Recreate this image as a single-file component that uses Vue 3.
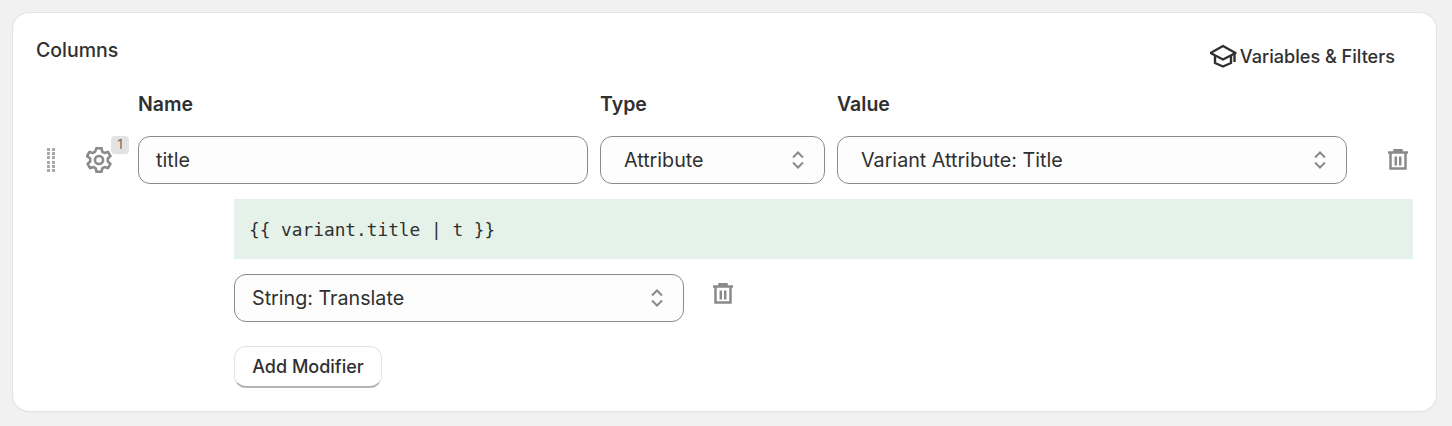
<script setup>
const chevron = 'M4 7.500 9 2.500 14 7.500M4 12.500 9 17.500 14 12.500'
const trash = 'M1 4.500h20M7.500 4V2.200h7V4M3.500 5v15.500h15V5M8.800 8.500v9M13.200 8.500v9'
</script>

<template>
  <div class="page">
    <section class="card">
      <header class="head">
        <h2 class="title">Columns</h2>
        <div class="link">
          <svg class="cap" width="28" height="24" viewBox="1 0 28 24" fill="none" stroke="#303030" stroke-width="2.400" stroke-linejoin="round">
            <path d="M1.500 9 14 2l12.500 7L14 15.500z" />
            <path d="M6 12v7l8 3.500 8-3.500v-7" />
            <path d="M25.500 9v9" />
          </svg>
          <span>Variables &amp; Filters</span>
        </div>
      </header>

      <div class="labels">
        <span class="name-col">Name</span>
        <span class="type-col">Type</span>
        <span>Value</span>
      </div>

      <div class="row">
        <div class="handle">
          <i v-for="n in 12" :key="n"></i>
        </div>
        <div class="gear">
          <svg width="26" height="26" viewBox="1.500 1.500 23 23" fill="none" stroke="#8a8a8a" stroke-width="2.300" stroke-linejoin="round">
            <path d="M10.800 2.500h4.400l.7 3.100 2 1.200 3-1 2.200 3.800-2.300 2.100v2.600l2.300 2.100-2.200 3.800-3-1-2 1.200-.7 3.100h-4.400l-.7-3.100-2-1.200-3 1-2.200-3.800 2.300-2.100v-2.600L2.400 9.600l2.200-3.800 3 1 2-1.200z" />
            <circle cx="13" cy="13" r="3.600" />
          </svg>
          <span class="badge">1</span>
        </div>
        <div class="field name-col">title</div>
        <div class="field select type-col">
          <span>Attribute</span>
          <svg width="18" height="20" viewBox="0 0 18 20" fill="none" stroke="#8a8a8a" stroke-width="2"><path :d="chevron" /></svg>
        </div>
        <div class="field select value-col">
          <span>Variant Attribute: Title</span>
          <svg width="18" height="20" viewBox="0 0 18 20" fill="none" stroke="#8a8a8a" stroke-width="2"><path :d="chevron" /></svg>
        </div>
        <svg class="trash" width="22" height="24" viewBox="0 0 22 24" fill="none" stroke="#8a8a8a" stroke-width="2.500"><path :d="trash" /></svg>
      </div>

      <div class="modifiers">
        <div class="code">{{ '\{\{ variant.title | t \}\}' }}</div>
        <div class="mod-row">
          <div class="field select mod-select">
            <span>String: Translate</span>
            <svg width="18" height="20" viewBox="0 0 18 20" fill="none" stroke="#8a8a8a" stroke-width="2"><path :d="chevron" /></svg>
          </div>
          <svg class="trash-small" width="22" height="24" viewBox="0 0 22 24" fill="none" stroke="#8a8a8a" stroke-width="2.500"><path :d="trash" /></svg>
        </div>
        <button class="add" type="button">Add Modifier</button>
      </div>
    </section>
  </div>
</template>

<style>
html, body { margin: 0; background: #f1f1f1; }
</style>

<style scoped>
.page {
  padding: 13px 16px 15px 13px;
  font-family: Inter, "Liberation Sans", sans-serif;
  color: #303030;
}
.card {
  box-sizing: border-box;
  height: 398px;
  background: #fff;
  border-radius: 16px;
  box-shadow: 0 0 0 1px #e3e3e3, 0 1px 1px #d0d0d0;
  padding: 26px 23px 0;
}
.head {
  display: flex;
  justify-content: space-between;
  height: 53px;
}
.title {
  margin: 0;
  font-size: 19.500px;
  line-height: 22px;
  font-weight: 500;
}
.link {
  display: flex;
  align-items: center;
  gap: 2px;
  height: 24px;
  margin: 5px 18px 0 0;
  font-size: 18.100px;
  font-weight: 500;
}
.labels {
  display: flex;
  padding-left: 102px;
  gap: 12px;
  font-size: 19.500px;
  font-weight: 600;
  line-height: 24px;
}
.labels .name-col { width: 450px; }
.labels .type-col { width: 225px; }
.row {
  display: flex;
  align-items: center;
  gap: 12px;
  margin-top: 20px;
}
.handle {
  display: grid;
  grid-template-columns: repeat(2, 3px);
  gap: 1.400px 2px;
  width: 8px;
  margin-left: 11px;
  flex-shrink: 0;
}
.handle i {
  width: 3px;
  height: 3px;
  background: #aaaaaa;
}
.gear {
  position: relative;
  display: flex;
  flex-shrink: 0;
  width: 26px;
  margin-left: 19px;
}
.badge {
  position: absolute;
  top: -11px;
  left: 25px;
  width: 18px;
  height: 18px;
  border-radius: 4px;
  background: #e3e3e3;
  font-size: 12.500px;
  line-height: 18px;
  text-align: center;
  color: #616161;
}
.field {
  box-sizing: border-box;
  flex-shrink: 0;
  height: 48px;
  display: flex;
  align-items: center;
  background: #fdfdfd;
  border: 1px solid #8a8a8a;
  border-radius: 12px;
  font-size: 19.700px;
  padding: 0 17px;
}
.row > .name-col { width: 450px; margin-left: 14px; }
.row > .type-col { width: 225px; }
.value-col { width: 510px; }
.select {
  justify-content: space-between;
  padding: 0 17px 0 23px;
}
.trash { flex-shrink: 0; margin-left: 28px; }
.modifiers {
  margin: 15px 0 0 198px;
}
.code {
  height: 60px;
  width: 1179px;
  box-sizing: border-box;
  padding-left: 15px;
  display: flex;
  align-items: center;
  background: #e5f2e9;
  font-family: "DejaVu Sans Mono", monospace;
  font-size: 17.800px;
}
.mod-row {
  display: flex;
  align-items: flex-start;
  gap: 28px;
  margin-top: 15px;
}
.mod-select {
  width: 450px;
  padding-left: 17px;
}
.trash-small { margin-top: 8px; }
.add {
  display: block;
  box-sizing: border-box;
  width: 148px;
  height: 42px;
  margin-top: 24px;
  padding: 0;
  background: #fff;
  border: 1px solid #e3e3e3;
  border-bottom: 2px solid #b5b5b5;
  border-radius: 12px;
  font: 500 18px Inter, "Liberation Sans", sans-serif;
  color: #303030;
}
</style>
